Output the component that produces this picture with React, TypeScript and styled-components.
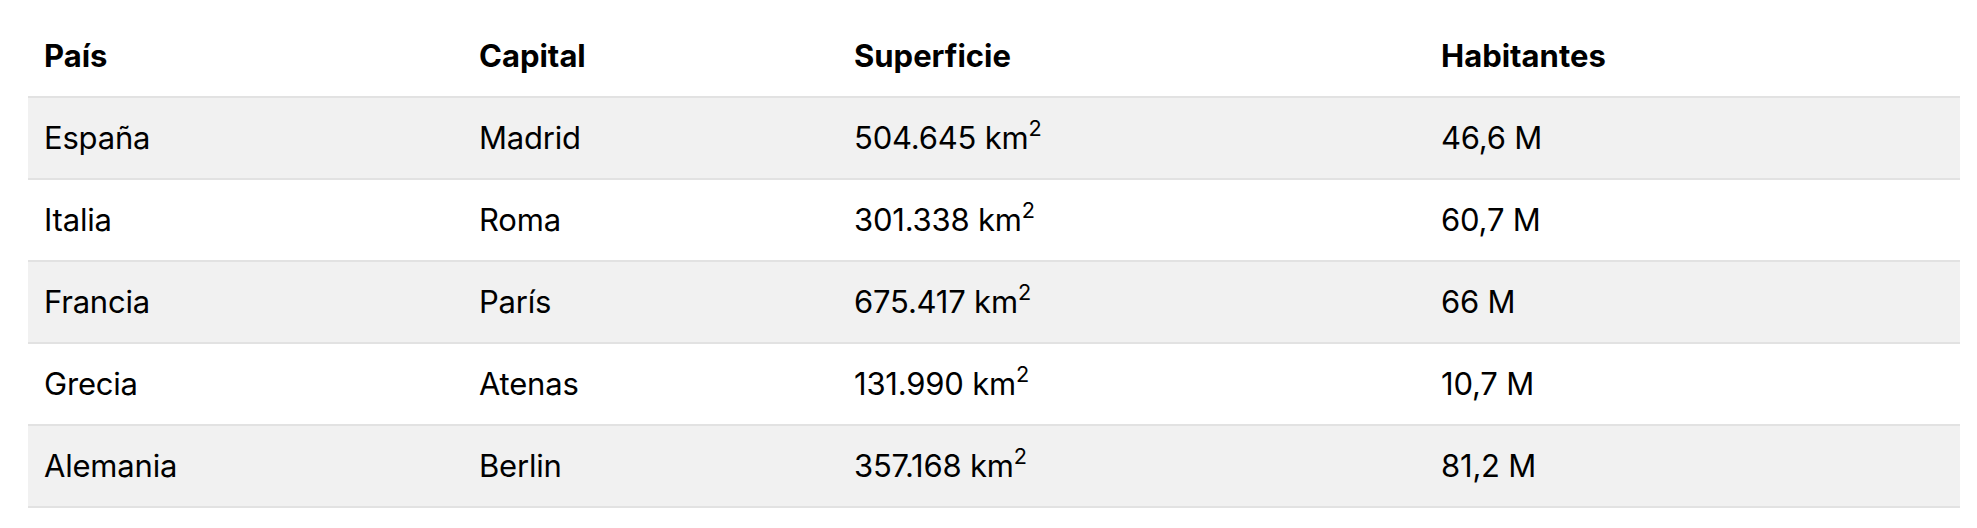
import styled, { createGlobalStyle } from 'styled-components';

const GlobalStyle = createGlobalStyle`
  html, body {
    margin: 0;
    padding: 0;
    background: #ffffff;
  }
  body {
    font-family: Inter, "Noto Sans", "Liberation Sans", sans-serif;
    color: #000000;
  }
  *, *::before, *::after {
    box-sizing: border-box;
  }
`;

const Page = styled.div`
  padding: 16px 17px 0 28px;
`;

const Table = styled.table`
  width: 100%;
  border-collapse: collapse;
  table-layout: fixed;
  font-size: 31px;
  line-height: 40px;
`;

const HeadCell = styled.th<{ $width: number }>`
  width: ${(p) => p.$width}px;
  text-align: left;
  font-weight: 700;
  padding: 20px 16px;
  border-bottom: 2px solid #e2e2e2;
`;

const Row = styled.tr<{ $striped: boolean }>`
  background: ${(p) => (p.$striped ? '#f1f1f1' : '#ffffff')};
  border-bottom: 2px solid #e2e2e2;
`;

const Cell = styled.td`
  padding: 20px 16px;
  font-weight: 400;
  letter-spacing: -0.2px;
`;

const Sup = styled.sup`
  font-size: 0.7em;
  line-height: 0;
  vertical-align: 0.6em;
`;

interface Country {
  name: string;
  capital: string;
  area: string;
  people: string;
}

const countries: Country[] = [
  { name: 'España', capital: 'Madrid', area: '504.645', people: '46,6 M' },
  { name: 'Italia', capital: 'Roma', area: '301.338', people: '60,7 M' },
  { name: 'Francia', capital: 'París', area: '675.417', people: '66 M' },
  { name: 'Grecia', capital: 'Atenas', area: '131.990', people: '10,7 M' },
  { name: 'Alemania', capital: 'Berlin', area: '357.168', people: '81,2 M' },
];

export default function App() {
  return (
    <Page>
      <GlobalStyle />
      <Table>
        <thead>
          <tr>
            <HeadCell $width={435}>País</HeadCell>
            <HeadCell $width={375}>Capital</HeadCell>
            <HeadCell $width={587}>Superficie</HeadCell>
            <HeadCell $width={535}>Habitantes</HeadCell>
          </tr>
        </thead>
        <tbody>
          {countries.map((c, i) => (
            <Row key={c.name} $striped={i % 2 === 0}>
              <Cell>{c.name}</Cell>
              <Cell>{c.capital}</Cell>
              <Cell>
                {c.area} km<Sup>2</Sup>
              </Cell>
              <Cell>{c.people}</Cell>
            </Row>
          ))}
        </tbody>
      </Table>
    </Page>
  );
}
